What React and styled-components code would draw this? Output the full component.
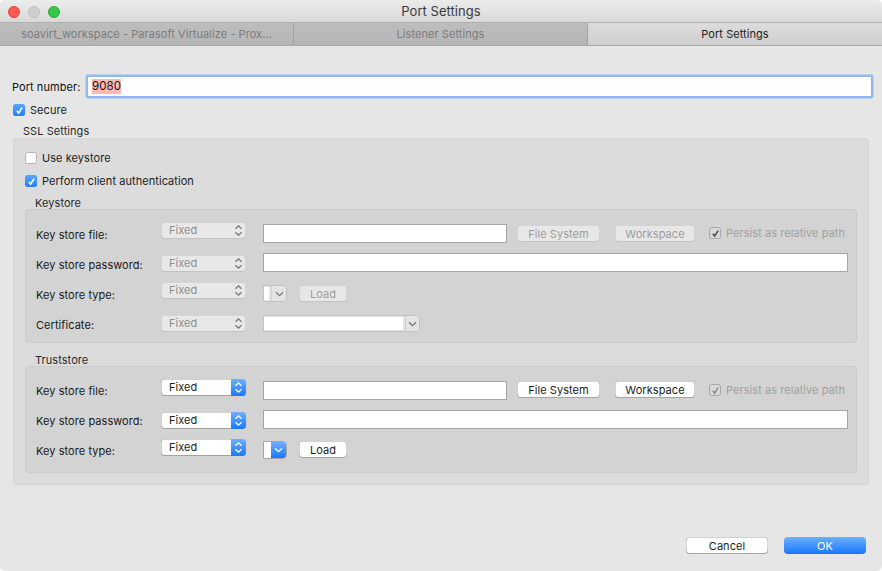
import React from "react";
import styled, { createGlobalStyle } from "styled-components";

const Global = createGlobalStyle`
  html, body { margin: 0; padding: 0; background: #fff; }
  body { font-family: "Inter", "Liberation Sans", sans-serif; font-size: 11px; letter-spacing: .06px; color: #1c1c1c; }
  * { box-sizing: border-box; }
`;

const Window = styled.div`
  width: 882px; height: 571px; background: #e6e6e6; display: flex; flex-direction: column;
  border-radius: 5px; overflow: hidden;
`;
const TitleBar = styled.div`
  height: 23px; flex: none; display: flex; align-items: center; position: relative;
  background: linear-gradient(#ececec, #d8d8d8); justify-content: center;
  border-bottom: 1px solid #b0b0b0;
`;
const Lights = styled.div`
  position: absolute; left: 8px; top: 6px; display: flex; gap: 8px;
`;
const Light = styled.span`
  width: 12px; height: 12px; border-radius: 50%; background: ${p => p.$c}; border: 1px solid ${p => p.$b};
`;
const Title = styled.div`
  font-size: 13px; color: #3a3a3a; letter-spacing: 0.05px; line-height: 16px;
`;
const Tabs = styled.div`
  height: 23px; flex: none; display: flex; border-bottom: 1px solid #a9a9a9;
`;
const Tab = styled.div`
  width: ${p => p.$w}px; flex: none; display: flex; align-items: center; justify-content: center;
  white-space: nowrap;
  background: ${p => p.$active ? "linear-gradient(#dcdcdc, #cfcfcf)" : "linear-gradient(#bdbdbd, #b5b5b5)"};
  color: ${p => p.$active ? "#222" : "#7c7c7c"};
  border-right: ${p => p.$last ? "none" : "1px solid #a3a3a3"};
`;
const Content = styled.div`
  flex: 1; display: flex; flex-direction: column; padding: 29px 10px 0 13px; min-height: 0;
`;
const PortRow = styled.div`
  display: flex; align-items: center; height: 23px; margin-left: -1px;
`;
const PortLabel = styled.label`
  width: 75px; flex: none; color: #111;
`;
const PortInput = styled.div`
  flex: 1; height: 21px; background: #fff; border: 1px solid #8fb8ee; box-shadow: 0 0 0 1.5px #93bbee;
  border-radius: 1px; display: flex; align-items: center; padding-left: 4px; font-size: 11.5px;
  color: #111;
`;
const Selected = styled.span`
  background: #fcb9b4; line-height: 15px; height: 15px;
`;
const Check = styled.span`
  width: 12px; height: 12px; flex: none; border-radius: 2.5px; display: inline-flex; align-items: center; justify-content: center;
  background: ${p => p.$on ? "linear-gradient(#5aa5fb, #1f7efb)" : "#fff"};
  border: ${p => p.$on ? "none" : "1px solid #b5b5b5"};
  ${p => p.$muted && "background: #d8d8d8; border: 1px solid #a8a8a8;"}
`;
const CheckRow = styled.div`
  display: flex; align-items: center; gap: ${p => p.$gap ?? 5}px; height: 16px; color: #222; white-space: nowrap;
  margin-top: ${p => p.$mt ?? 0}px; margin-left: ${p => p.$ml ?? 0}px;
`;
const GroupTitle = styled.div`
  height: 13px; line-height: 14px; color: #2a2a2a; margin-left: ${p => p.$ml}px; margin-top: ${p => p.$mt}px;
`;
const OuterGroup = styled.div`
  width: 856px; height: 347px; background: #dcdcdc; border: 1px solid #d4d4d4; border-radius: 3px;
  padding: 5px 11px 0 11px; margin-top: 1px;
`;
const InnerGroup = styled.div`
  width: 832px; height: ${p => p.$h}px; background: #d3d3d3; border: 1px solid #cbcbcb; border-radius: 3px;
  padding: ${p => p.$pt}px 8px 0 10px;
`;
const Row = styled.div`
  display: flex; align-items: flex-start; height: ${p => p.$h}px;
`;
const Label = styled.div`
  width: 125px; flex: none; height: 16px; line-height: 16px; color: #1a1a1a; margin-top: ${p => p.$mt ?? 0}px;
`;
const SelectBox = styled.div`
  width: 85px; height: 17px; flex: none; margin-top: ${p => p.$mt ?? 0}px; margin-right: 17px; border-radius: 4px;
  display: flex; overflow: hidden; position: relative;
  box-shadow: inset 0 0 0 .5px ${p => p.$off ? "#c2c2c2" : "#a4a4a4"}, inset 0 -1px 0 ${p => p.$off ? "#c4c4c4" : "#9f9f9f"};
  background: ${p => p.$off ? "#e8e8e8" : "#fff"};
  color: ${p => p.$off ? "#8d8d8d" : "#222"};
`;
const SelectText = styled.span`
  flex: 1; padding-left: 8px; line-height: 16px;
`;
const Stepper = styled.span`
  width: 15px; flex: none; display: flex; align-items: center; justify-content: center;
  background: ${p => p.$off ? "transparent" : "linear-gradient(#6fb0fb, #1a78fb)"};
`;
const TextBox = styled.div`
  width: ${p => p.$w}px; height: 19px; flex: none; background: #fff; border: 1px solid #a6a6a6;
  margin-top: ${p => p.$mt ?? 0}px; margin-right: ${p => p.$mr ?? 0}px;
`;
const Btn = styled.div`
  width: ${p => p.$w}px; height: 17px; flex: none; display: flex; align-items: center; justify-content: center;
  border-radius: 4px; margin-top: ${p => p.$mt ?? 0}px; margin-right: ${p => p.$mr ?? 0}px;
  background: ${p => p.$off ? "#e7e7e7" : "#fff"}; color: ${p => p.$off ? "#9c9c9c" : "#1b1b1b"};
  box-shadow: inset 0 0 0 .5px ${p => p.$off ? "#c2c2c2" : "#a8a8a8"}, inset 0 -1px 0 ${p => p.$off ? "#c6c6c6" : "#a2a2a2"};
`;
const Persist = styled(CheckRow)`
  color: #a1a1a1; margin-top: ${p => p.$mt}px;
`;
const Combo = styled.div`
  width: ${p => p.$w}px; height: ${p => p.$h ?? 17}px; flex: none; display: flex; margin-top: ${p => p.$mt ?? 0}px; margin-right: 12px;
  border: 1px solid ${p => p.$off ? "#c2c2c2" : "#a6a6a6"}; border-radius: 0 4px 4px 0; background: ${p => p.$off ? "#e4e4e4" : "#fff"}; overflow: hidden;
`;
const ComboField = styled.span`
  flex: 1; background: #fff; margin: ${p => p.$off ? "1px 2px 1px 0" : "0"};
`;
const ComboArrow = styled.span`
  width: ${p => p.$w}px; flex: none; display: flex; align-items: center; justify-content: center;
  background: ${p => p.$off ? "#e4e4e4" : "linear-gradient(#6fb0fb, #1a78fb)"};
  ${p => p.$off && "border-left: 1px solid #cfcfcf;"}
`;
const Footer = styled.div`
  display: flex; justify-content: flex-end; gap: 16px; padding-right: 6px; margin-top: 52px;
`;
const PrimaryBtn = styled.div`
  width: 82px; height: 17px; border-radius: 4px; display: flex; align-items: center; justify-content: center;
  background: linear-gradient(#6db0fc, #1878fb); color: #fff;
`;
const FootBtn = styled(Btn)`
  width: 82px;
`;

const Tick = ({ c = "#fff" }) => (
  <svg width="9" height="9" viewBox="0 0 9 9"><path d="M1.8 4.8 3.6 7 7.2 1.6" fill="none" stroke={c} strokeWidth="1.7" /></svg>
);
const Updown = ({ c }) => (
  <svg width="9" height="13" viewBox="0 0 9 13"><path d="M1.5 4.8 4.5 1.8 7.5 4.8M1.5 8.2 4.5 11.2 7.5 8.2" fill="none" stroke={c} strokeWidth="1.3" /></svg>
);
const Down = ({ c }) => (
  <svg width="9" height="6" viewBox="0 0 9 6"><path d="M1 1.2 4.5 4.6 8 1.2" fill="none" stroke={c} strokeWidth="1.3" /></svg>
);

const Sel = ({ off, mt }) => (
  <SelectBox $off={off} $mt={mt}>
    <SelectText>Fixed</SelectText>
    <Stepper $off={off}><Updown c={off ? "#777" : "#fff"} /></Stepper>
  </SelectBox>
);

const FileRow = ({ off, h, labelMt, selMt, inputMt, btnMt, persistMt }) => (
  <Row $h={h}>
    <Label $mt={labelMt}>Key store file:</Label>
    <Sel off={off} mt={selMt} />
    <TextBox $w={244} $mt={inputMt} $mr={10} />
    <Btn $off={off} $w={83} $mt={btnMt} $mr={15}>File System</Btn>
    <Btn $off={off} $w={80} $mt={btnMt} $mr={14}>Workspace</Btn>
    <Persist $mt={persistMt}>
      <Check $muted><Tick c={off ? "#555" : "#8e8e8e"} /></Check>
      Persist as relative path
    </Persist>
  </Row>
);

export default function App() {
  return (
    <Window>
      <Global />
      <TitleBar>
        <Lights>
          <Light $c="#fc5753" $b="#e0443e" />
          <Light $c="#cfcfcf" $b="#c2c2c2" />
          <Light $c="#34c748" $b="#2aac37" />
        </Lights>
        <Title>Port Settings</Title>
      </TitleBar>
      <Tabs>
        <Tab $w={294}>soavirt_workspace - Parasoft Virtualize - Prox...</Tab>
        <Tab $w={294}>Listener Settings</Tab>
        <Tab $w={294} $active $last>Port Settings</Tab>
      </Tabs>
      <Content>
        <PortRow>
          <PortLabel>Port number:</PortLabel>
          <PortInput><Selected>9080</Selected></PortInput>
        </PortRow>
        <CheckRow $mt={4}><Check $on><Tick /></Check>Secure</CheckRow>
        <GroupTitle $ml={10} $mt={6}>SSL Settings</GroupTitle>
        <OuterGroup>
          <CheckRow $mt={6}><Check /><span>Use keystore</span></CheckRow>
          <CheckRow $mt={7}><Check $on><Tick /></Check>Perform client authentication</CheckRow>
          <GroupTitle $ml={10} $mt={7}>Keystore</GroupTitle>
          <InnerGroup $h={134} $pt={12}>
            <FileRow off h={31} labelMt={5} inputMt={2} btnMt={3} persistMt={3} />
            <Row $h={29}>
              <Label $mt={4}>Key store password:</Label>
              <Sel off mt={2} />
              <TextBox $w={585} />
            </Row>
            <Row $h={33}>
              <Label $mt={5}>Key store type:</Label>
              <Sel off />
              <Combo $off $w={24} $mt={3}><ComboField $off /><ComboArrow $off $w={15}><Down c="#777" /></ComboArrow></Combo>
              <Btn $off $w={48} $mt={3}>Load</Btn>
            </Row>
            <Row $h={20}>
              <Label $mt={2}>Certificate:</Label>
              <Sel off />
              <Combo $off $w={157}><ComboField $off /><ComboArrow $off $w={14}><Down c="#777" /></ComboArrow></Combo>
            </Row>
          </InnerGroup>
          <GroupTitle $ml={10} $mt={10}>Truststore</GroupTitle>
          <InnerGroup $h={107} $pt={11}>
            <FileRow h={32} labelMt={5} selMt={1} inputMt={3} btnMt={3} persistMt={4} />
            <Row $h={29}>
              <Label $mt={3}>Key store password:</Label>
              <Sel mt={2} />
              <TextBox $w={585} />
            </Row>
            <Row $h={20}>
              <Label $mt={4}>Key store type:</Label>
              <Sel />
              <Combo $w={24} $h={18} $mt={2}><ComboField /><ComboArrow $w={15}><Down c="#fff" /></ComboArrow></Combo>
              <Btn $w={48} $mt={2}>Load</Btn>
            </Row>
          </InnerGroup>
        </OuterGroup>
        <Footer>
          <FootBtn>Cancel</FootBtn>
          <PrimaryBtn>OK</PrimaryBtn>
        </Footer>
      </Content>
    </Window>
  );
}
